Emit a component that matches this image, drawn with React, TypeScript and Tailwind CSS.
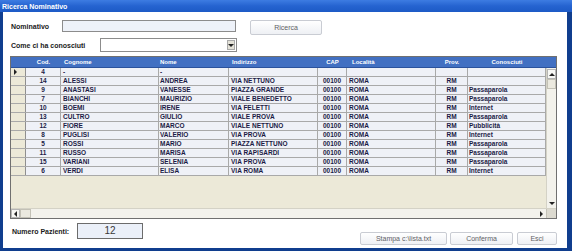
import React from "react";

type Col = { label: string; w: string; h: string; c: string };

const cols: Col[] = [
  { label: "Cod.", w: "w-[35px]", h: "justify-center", c: "justify-center" },
  { label: "Cognome", w: "w-[98px]", h: "justify-start pl-[3px]", c: "justify-start pl-[2px]" },
  { label: "Nome", w: "w-[70px]", h: "justify-start pl-[1px]", c: "justify-start pl-[1px]" },
  { label: "Indirizzo", w: "w-[89px]", h: "justify-start pl-[3px]", c: "justify-start pl-[2px]" },
  { label: "CAP", w: "w-[29px]", h: "justify-center", c: "justify-center" },
  { label: "Località", w: "w-[89px]", h: "justify-start pl-[5px]", c: "justify-start pl-[2px]" },
  { label: "Prov.", w: "w-[32px]", h: "justify-center", c: "justify-center" },
  { label: "Conosciuti", w: "w-[78px]", h: "justify-center", c: "justify-start pl-[1px]" },
];

const rows: string[][] = [
  ["4", "-", "-", "", "", "", "", ""],
  ["14", "ALESSI", "ANDREA", "VIA NETTUNO", "00100", "ROMA", "RM", ""],
  ["9", "ANASTASI", "VANESSE", "PIAZZA GRANDE", "00100", "ROMA", "RM", "Passaparola"],
  ["7", "BIANCHI", "MAURIZIO", "VIALE BENEDETTO", "00100", "ROMA", "RM", "Passaparola"],
  ["10", "BOEMI", "IRENE", "VIA FELETTI", "00100", "ROMA", "RM", "Internet"],
  ["13", "CULTRO", "GIULIO", "VIALE PROVA", "00100", "ROMA", "RM", "Passaparola"],
  ["12", "FIORE", "MARCO", "VIALE NETTUNO", "00100", "ROMA", "RM", "Pubblicità"],
  ["8", "PUGLISI", "VALERIO", "VIA PROVA", "00100", "ROMA", "RM", "Internet"],
  ["5", "ROSSI", "MARIO", "PIAZZA NETTUNO", "00100", "ROMA", "RM", "Passaparola"],
  ["11", "RUSSO", "MARISA", "VIA RAPISARDI", "00100", "ROMA", "RM", "Passaparola"],
  ["15", "VARIANI", "SELENIA", "VIA PROVA", "00100", "ROMA", "RM", "Passaparola"],
  ["6", "VERDI", "ELISA", "VIA ROMA", "00100", "ROMA", "RM", "Internet"],
];

const font = "font-['Liberation_Sans',Arial,sans-serif]";

function Tri({ dir }: { dir: "up" | "down" | "left" | "right" }) {
  const pts =
    dir === "up"
      ? "0,3 3,0 6,3"
      : dir === "down"
      ? "0,0 6,0 3,3"
      : dir === "left"
      ? "3,0 3,6 0,3"
      : "0,0 0,6 3,3";
  const w = dir === "up" || dir === "down" ? 6 : 3;
  const h = dir === "up" || dir === "down" ? 3 : 6;
  return (
    <svg width={w} height={h} viewBox={`0 0 ${w} ${h}`}>
      <polygon points={pts} fill="#222" />
    </svg>
  );
}

function Btn({ w, label }: { w: string; label: string }) {
  return (
    <div
      className={`${w} h-[13px] flex items-center justify-center border border-[#c9ccd3] rounded-[2px] bg-linear-to-b from-white to-[#eef0f4] text-[7px] text-[#5f6166] leading-none`}
    >
      {label}
    </div>
  );
}

export default function App() {
  return (
    <div className={`w-[572px] h-[251px] bg-[#103e8e] flex flex-col ${font}`}>
      <div className="h-[12px] flex items-center pl-[2px] bg-linear-to-b from-[#3d7ce2] via-[#2563d0] to-[#1d5ac6] text-white text-[7px] font-bold leading-none">
        Ricerca Nominativo
      </div>
      <div className="flex-1 ml-[3px] mr-[5px] mb-[3px] bg-white flex flex-col pt-[8px]">
        <div className="flex items-start h-[15px] ml-[8px]">
          <div className="w-[51px] h-[12px] flex items-center text-[7px] font-bold text-[#1a1a1a] leading-none">
            Nominativo
          </div>
          <div className="w-[174px] h-[12px] border border-[#8c8c8c] bg-[#eef2f9]" />
          <div className="ml-[14px] w-[72px] h-[15px] flex items-center justify-center border border-[#c9ccd3] rounded-[2px] bg-linear-to-b from-white to-[#eef0f4] text-[7px] text-[#5f6166] leading-none">
            Ricerca
          </div>
        </div>
        <div className="flex items-center h-[14px] mt-[3px] ml-[8px]">
          <div className="w-[89px] text-[7px] font-bold text-[#1a1a1a] leading-none">
            Come ci ha conosciuti
          </div>
          <div className="w-[137px] h-[14px] border border-[#8c8c8c] bg-white flex justify-end items-center pr-[1px]">
            <div className="w-[8px] h-[10px] bg-[#e4e2d8] border border-[#a9a9a9] flex items-center justify-center">
              <Tri dir="down" />
            </div>
          </div>
        </div>

        <div className="mt-[4px] ml-[7px] w-[547px] h-[163px] border border-[#707070] flex flex-col bg-[#ece9d8]">
          <div className="h-[11px] flex bg-[#4270c2] border-b border-[#2b529c] text-white text-[6px] font-bold leading-none">
            <div className="w-[15px]" />
            {cols.map((c) => (
              <div key={c.label} className={`${c.w} flex items-center ${c.h}`}>
                {c.label}
              </div>
            ))}
          </div>
          <div className="flex-1 flex min-h-0">
            <div className="flex-1 flex flex-col">
              {rows.map((r, i) => (
                <div
                  key={i}
                  className="flex h-[9px] border-b border-[#a9a9a9] bg-[#eff1f7] text-[6.5px] font-bold text-[#1b1b45] leading-none"
                >
                  <div className="w-[15px] flex items-center pl-[3px] bg-[#ece9d8] border-r border-[#8f8f8f]">
                    {i === 0 && <Tri dir="right" />}
                  </div>
                  {cols.map((c, j) => (
                    <div
                      key={j}
                      className={`${c.w} flex items-center ${c.c} border-r border-[#a9a9a9] whitespace-nowrap overflow-hidden`}
                    >
                      {r[j]}
                    </div>
                  ))}
                </div>
              ))}
              <div className="flex-1" />
            </div>
            <div className="w-[10px] flex flex-col bg-[#f3f2ec] border-l border-[#d4d2c6]">
              <div className="h-[10px] mt-[1px] border border-[#b5b5b5] bg-[#f7f7f4] flex items-center justify-center">
                <Tri dir="up" />
              </div>
              <div className="h-[10px] border border-[#c3c1b6] bg-[#ebe9df]" />
              <div className="flex-1" />
              <div className="h-[9px] flex items-center justify-center">
                <Tri dir="down" />
              </div>
            </div>
          </div>
          <div className="h-[10px] flex bg-[#f3f2ec] border-t border-[#d4d2c6]">
            <div className="w-[9px] border border-[#b5b5b5] bg-[#f7f7f4] flex items-center justify-center">
              <Tri dir="left" />
            </div>
            <div className="w-[11px] border border-[#c3c1b6] bg-[#ebe9df]" />
            <div className="flex-1" />
            <div className="w-[9px] flex items-center justify-center">
              <Tri dir="right" />
            </div>
            <div className="w-[10px] bg-[#dcdad0] border-l border-[#c3c1b6]" />
          </div>
        </div>

        <div className="flex items-start mt-[4px]">
          <div className="ml-[9px] w-[65px] h-[16px] flex items-center text-[7px] font-bold text-[#1a1a1a] leading-none">
            Numero Pazienti:
          </div>
          <div className="w-[66px] h-[16px] border border-[#6c6c6c] bg-[#ebf0f9] flex items-center justify-center text-[10px] text-[#3a3a3a] leading-none">
            12
          </div>
          <div className="ml-auto mr-[10px] mt-[9px] flex">
            <Btn w="w-[87px]" label="Stampa c:\lista.txt" />
            <div className="w-[3px]" />
            <Btn w="w-[63px]" label="Conferma" />
            <div className="w-[4px]" />
            <Btn w="w-[40px]" label="Esci" />
          </div>
        </div>
      </div>
    </div>
  );
}
